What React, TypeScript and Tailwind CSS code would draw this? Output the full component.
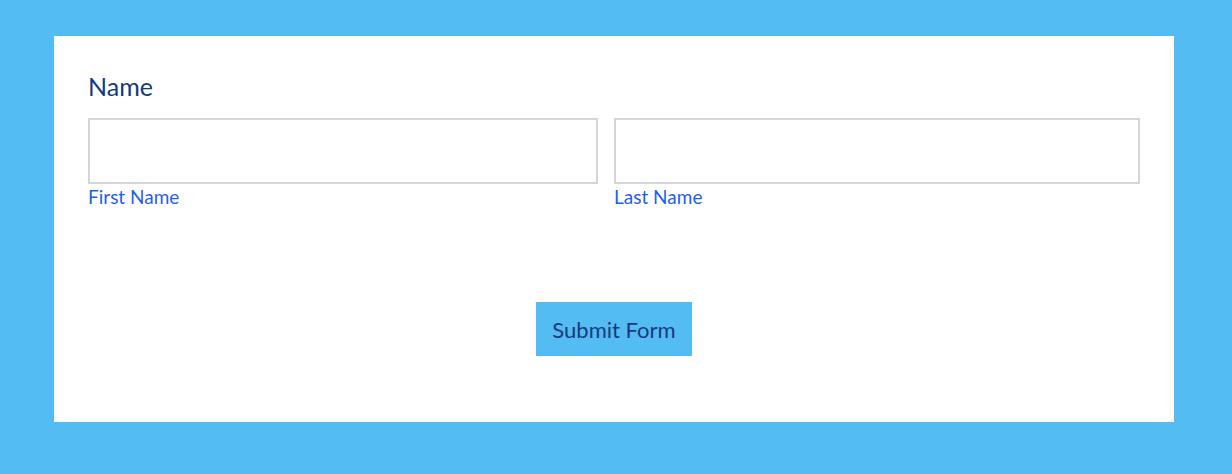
import React from 'react';

const App: React.FC = () => (
  <div
    className="min-h-[474px] bg-[#53bdf3] pl-[54px] pr-[58px] pt-9 pb-[52px]"
    style={{ fontFamily: 'Lato, "Open Sans", sans-serif' }}
  >
    <form className="bg-white px-[34px] pt-[33px] pb-[66px]">
      <label className="block text-[25px] leading-[34px] text-[#163a7c]">Name</label>
      <div className="mt-[15px] flex gap-4">
        <div className="w-[510px]">
          <input type="text" className="block h-[66px] w-full border-2 border-[#d2d5d9] outline-none" />
          <span className="block text-[19px] leading-[26px] text-[#1f5fee]">First Name</span>
        </div>
        <div className="flex-1">
          <input type="text" className="block h-[66px] w-full border-2 border-[#d2d5d9] outline-none" />
          <span className="block text-[19px] leading-[26px] text-[#1f5fee]">Last Name</span>
        </div>
      </div>
      <div className="mt-[92px] flex justify-center">
        <button type="submit" className="h-[54px] w-[156px] bg-[#53bdf3] text-[22px] text-[#163a7c]">
          Submit Form
        </button>
      </div>
    </form>
  </div>
);

export default App;
